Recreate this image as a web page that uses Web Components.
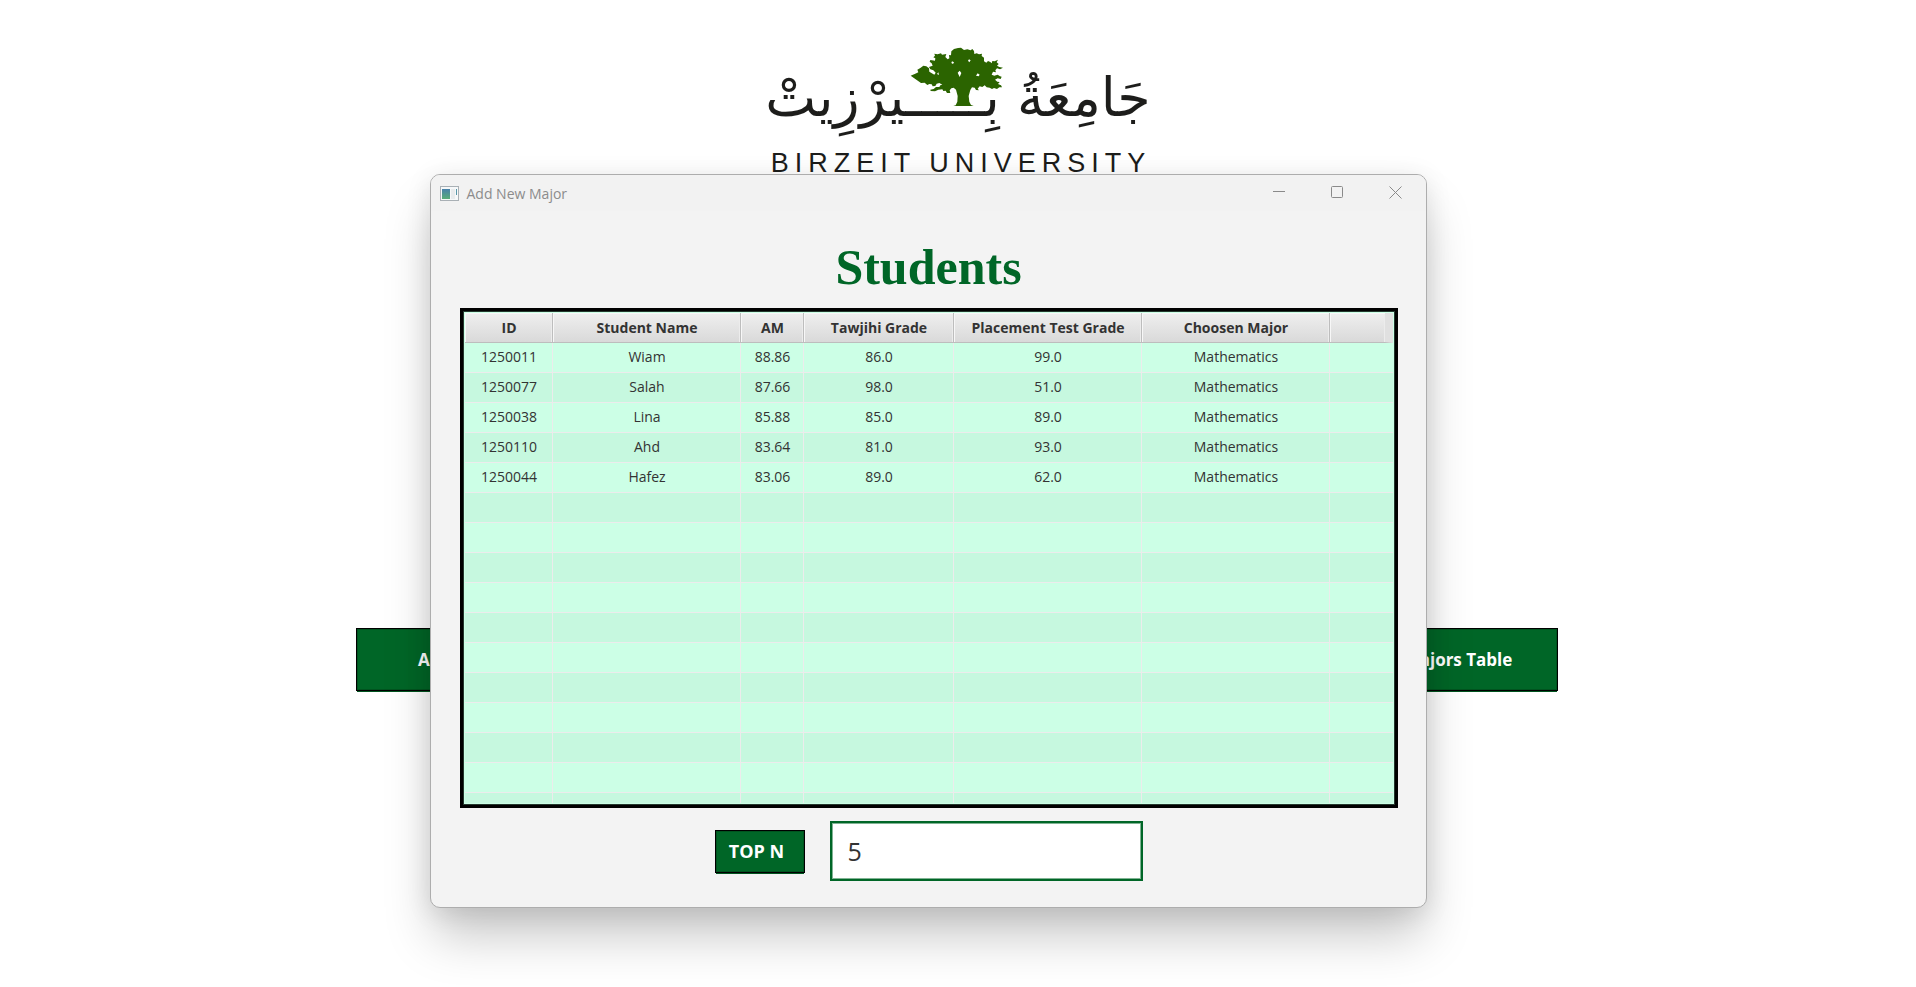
<!DOCTYPE html>
<html lang="en">
<head>
<meta charset="utf-8">
<title>Birzeit University</title>
<style>
body { margin: 0; background: #fff; font-family: "Open Sans", "Noto Sans", sans-serif; color: #333; }
</style>
</head>
<body>
<app-desktop>
  <university-logo slot="logo"></university-logo>
  <action-button slot="actions" size="large">Add New</action-button>
  <action-button slot="actions" size="large">Majors Table</action-button>
  <app-window slot="window" caption="Add New Major">
    <page-heading>Students</page-heading>
    <students-table></students-table>
    <top-form></top-form>
  </app-window>
</app-desktop>

<script>
function define(name, html, setup) {
  const template = document.createElement('template');
  template.innerHTML = html;
  customElements.define(name, class extends HTMLElement {
    constructor() {
      super();
      this.attachShadow({ mode: 'open' }).append(template.content.cloneNode(true));
    }
    connectedCallback() { if (setup) setup(this, this.shadowRoot); }
  });
}

define('app-desktop', `
<style>
:host { display: flex; flex-direction: column; align-items: center; min-height: 100vh; position: relative; overflow: hidden; box-sizing: border-box; padding-top: 40px; }
.actions { display: flex; justify-content: space-between; width: min(1202px, 90%); margin-top: 448px; padding-right: 2px; }
.layer { position: absolute; top: 174px; left: 0; right: 60px; display: flex; justify-content: center; }
</style>
<slot name="logo"></slot>
<div class="actions"><slot name="actions"></slot></div>
<div class="layer"><slot name="window"></slot></div>`);

define('university-logo', `
<style>
:host { display: flex; flex-direction: column; align-items: center; position: relative; width: 384px; height: 140px; }
.ar { font: 54px/116px "DejaVu Sans", sans-serif; height: 107px; color: #1d1d1b; white-space: nowrap; }
.en { font: 27px/32px "Liberation Sans", sans-serif; letter-spacing: 6px; color: #1d1d1b; white-space: nowrap; padding-left: 6px; }
svg { position: absolute; left: 144px; top: 8px; width: 96px; height: 64px; margin-top: -6px; }
</style>
<div class="ar" lang="ar" dir="rtl">جَامِعَةُ بِـــــيرْزِيتْ</div>
<div class="en">BIRZEIT UNIVERSITY</div>
<svg viewBox="450 24 288 192" aria-hidden="true">
  <path fill="#2b6400" fill-rule="evenodd" d="M452 125l17-7 6-3-3-8 9-5 9-7 9 2 8 6 1 10 15 9 4-6-7-7-9-3-4-7 11-4-3-7-6-5 2-5 14 2 1-7-6-3 5-5-2-6 10 2 10-3 3 4 13-2-3 9 7 7 5-3-1-10 6 1 1-12 8-7 12-3 9-1 9 7 10-2 10 3 5-4 5 6 1 9 7-2 7 3 9-2-1 7 7 5 0 11 7 4 5-5 7 3 4 4 2-7 7 1 10-5-4 8 6 5-5 5 7 4 11 2-9 5-9-3-5 6 2 6-9-2-4 9 8 3 10-3 7 5 5 1-3 7-9-2-8 4 7 6 7 1-5 6 9 4 3 6-8 0-7 5-9-3-6 3-7-4-9-1-6-6-7 5-8-2-6 7 4 5-9-1-4-7-8-1-5 8-5 18 2 17 5 10 16 6 4 4-21-2-20 2-18-2-25 1 4-4 14-4 5-11 1-17-5-19-7-6-7 2-5 6 2 8-10 0-4-7-7 1-3-5-12 1-10 5-13-1-1-4 10-2 7-6 10 0 3-5 6-2-9-5-8 2-4 7-8 1-3-6-7-1-6 3-8-7-11 1zm79-5l6 3-2-8zm62-4l6 13 5-12-5-7zm55 9l8 2 3-5-6-4zm-24-45l4 5 4-6-5-3zm-50 7l5 3 3-5-6-3z"/>
</svg>`);

define('action-button', `
<style>
:host { display: inline-flex; }
button { font: bold 18px/24px "Open Sans", sans-serif; color: #fff; background: #006627; border: 1px solid #000; border-radius: 0; padding: 0 6px 0 0; margin: 0; width: 90px; height: 43px; box-shadow: inset 0 0 0 1px #00541f, 0 2px 0 -1px #00541f; white-space: nowrap; cursor: pointer; }
:host([size=large]) button { width: 200px; height: 63px; font-size: 17px; padding: 0; }
</style>
<button type="button"><slot></slot></button>`);

define('app-window', `
<style>
:host { display: flex; flex-direction: column; width: 997px; height: 734px; box-sizing: border-box; border: 1px solid #adadad; border-radius: 10px; background: #f3f3f3; box-shadow: 0 32px 50px -4px rgba(0,0,0,.22), 0 4px 26px rgba(0,0,0,.1); }
header { display: flex; align-items: center; height: 36px; border-radius: 9px 9px 0 0; background: #f2f2f2; padding-left: 9px; color: #8c8c8c; font-size: 14px; }
.caption { margin-left: 8px; flex: 1; }
.icon { width: 19px; height: 15px; }
button { width: 58px; height: 36px; border: 0; background: none; padding: 0 2px 2px 0; display: grid; place-items: center; color: #8a8a8a; }
main { display: flex; flex-direction: column; align-items: center; padding: 26px 28px 0 29px; }
</style>
<header>
  <svg class="icon" viewBox="0 0 19 15" aria-hidden="true">
    <defs><linearGradient id="g" x1="0" y1="0" x2="0" y2="1"><stop offset="0" stop-color="#4881aa"/><stop offset="1" stop-color="#58ad78"/></linearGradient></defs>
    <rect x=".5" y=".5" width="18" height="14" fill="#f6f8f9" stroke="#a9b0b5"/>
    <rect x="2" y="3" width="8" height="10" fill="url(#g)"/><rect x="11" y="3" width="4" height="10" fill="#e8ebed"/>
    <path d="M16.500 3v6" stroke="#5796a8"/>
  </svg>
  <span class="caption"></span>
  <button type="button" aria-label="Minimize"><svg width="13" height="13" viewBox="0 0 13 13"><path d="M0 5.500h12" stroke="currentColor"/></svg></button>
  <button type="button" aria-label="Maximize"><svg width="13" height="13" viewBox="0 0 13 13"><rect x=".5" y=".5" width="11" height="11" rx="1" fill="none" stroke="currentColor"/></svg></button>
  <button type="button" aria-label="Close"><svg width="13" height="13" viewBox="0 0 13 13"><path d="M.5.500l12 12M12.500.500l-12 12" stroke="currentColor"/></svg></button>
</header>
<main><slot></slot></main>`, (host, root) => {
  root.querySelector('.caption').textContent = host.getAttribute('caption');
});

define('page-heading', `
<style>
:host { display: block; }
h1 { margin: 0; font: bold 50px/60px "Liberation Serif", serif; color: #006627; padding-bottom: 11px; }
</style>
<h1><slot></slot></h1>`);

const students = [
  ['1250011', 'Wiam', '88.86', '86.0', '99.0', 'Mathematics'],
  ['1250077', 'Salah', '87.66', '98.0', '51.0', 'Mathematics'],
  ['1250038', 'Lina', '85.88', '85.0', '89.0', 'Mathematics'],
  ['1250110', 'Ahd', '83.64', '81.0', '93.0', 'Mathematics'],
  ['1250044', 'Hafez', '83.06', '89.0', '62.0', 'Mathematics']
];

define('students-table', `
<style>
:host { display: block; width: 100%; height: 500px; box-sizing: border-box; border: 3px solid #000; }
.frame { height: 100%; box-sizing: border-box; border: 1px solid #24382e; background: #ccffe6; padding: 1px; overflow: hidden; }
.clip { height: 100%; overflow: hidden; }
table { width: 100%; table-layout: fixed; border-collapse: separate; border-spacing: 0; }
th, td { box-sizing: border-box; height: 30px; padding: 0 0 0 2px; text-align: center; font-size: 14px; line-height: 20px; white-space: nowrap; overflow: hidden; }
th { font-weight: bold; background: linear-gradient(#efefef, #d9d9d9); border-right: 1px solid #bdbdbd; border-bottom: 1px solid #bdbdbd; box-shadow: inset 1px 1px 0 #f7f7f7, inset -1px 0 0 #ececec; }
th:last-child { border-right: 8px solid #e0e0e0; }
td { border-right: 1px solid #ececec; border-bottom: 1px solid #ececec; padding-bottom: 2px; }
td:last-child { border-right: 0; }
tr:nth-child(even) td { background: #c6f8df; }
.id { width: 88px; } .wide { width: 188px; } .am { width: 63px; } .mid { width: 150px; }
</style>
<div class="frame"><div class="clip"><table>
  <colgroup><col class="id"><col class="wide"><col class="am"><col class="mid"><col class="wide"><col class="wide"><col></colgroup>
  <thead><tr><th>ID</th><th>Student Name</th><th>AM</th><th>Tawjihi Grade</th><th>Placement Test Grade</th><th>Choosen Major</th><th></th></tr></thead>
  <tbody></tbody>
</table></div></div>`, (host, root) => {
  const body = root.querySelector('tbody');
  for (let r = 0; r < 16; r++) {
    const row = body.insertRow();
    for (let c = 0; c < 7; c++) row.insertCell().textContent = (students[r] || [])[c] || '';
  }
});

define('top-form', `
<style>
:host { display: block; padding-top: 13px; }
form { display: flex; align-items: center; gap: 25px; margin: 0; }
input { width: 313px; height: 60px; box-sizing: border-box; border: 2px solid #006627; border-radius: 0; outline: 0; box-shadow: inset 0 0 0 1px #80b393; background: #fff; padding: 0 16px; font: 25px/36px "Open Sans", sans-serif; color: #333; }
</style>
<form><action-button>TOP N</action-button><input type="text" value="5" aria-label="Number of students"></form>`);
</script>
</body>
</html>
